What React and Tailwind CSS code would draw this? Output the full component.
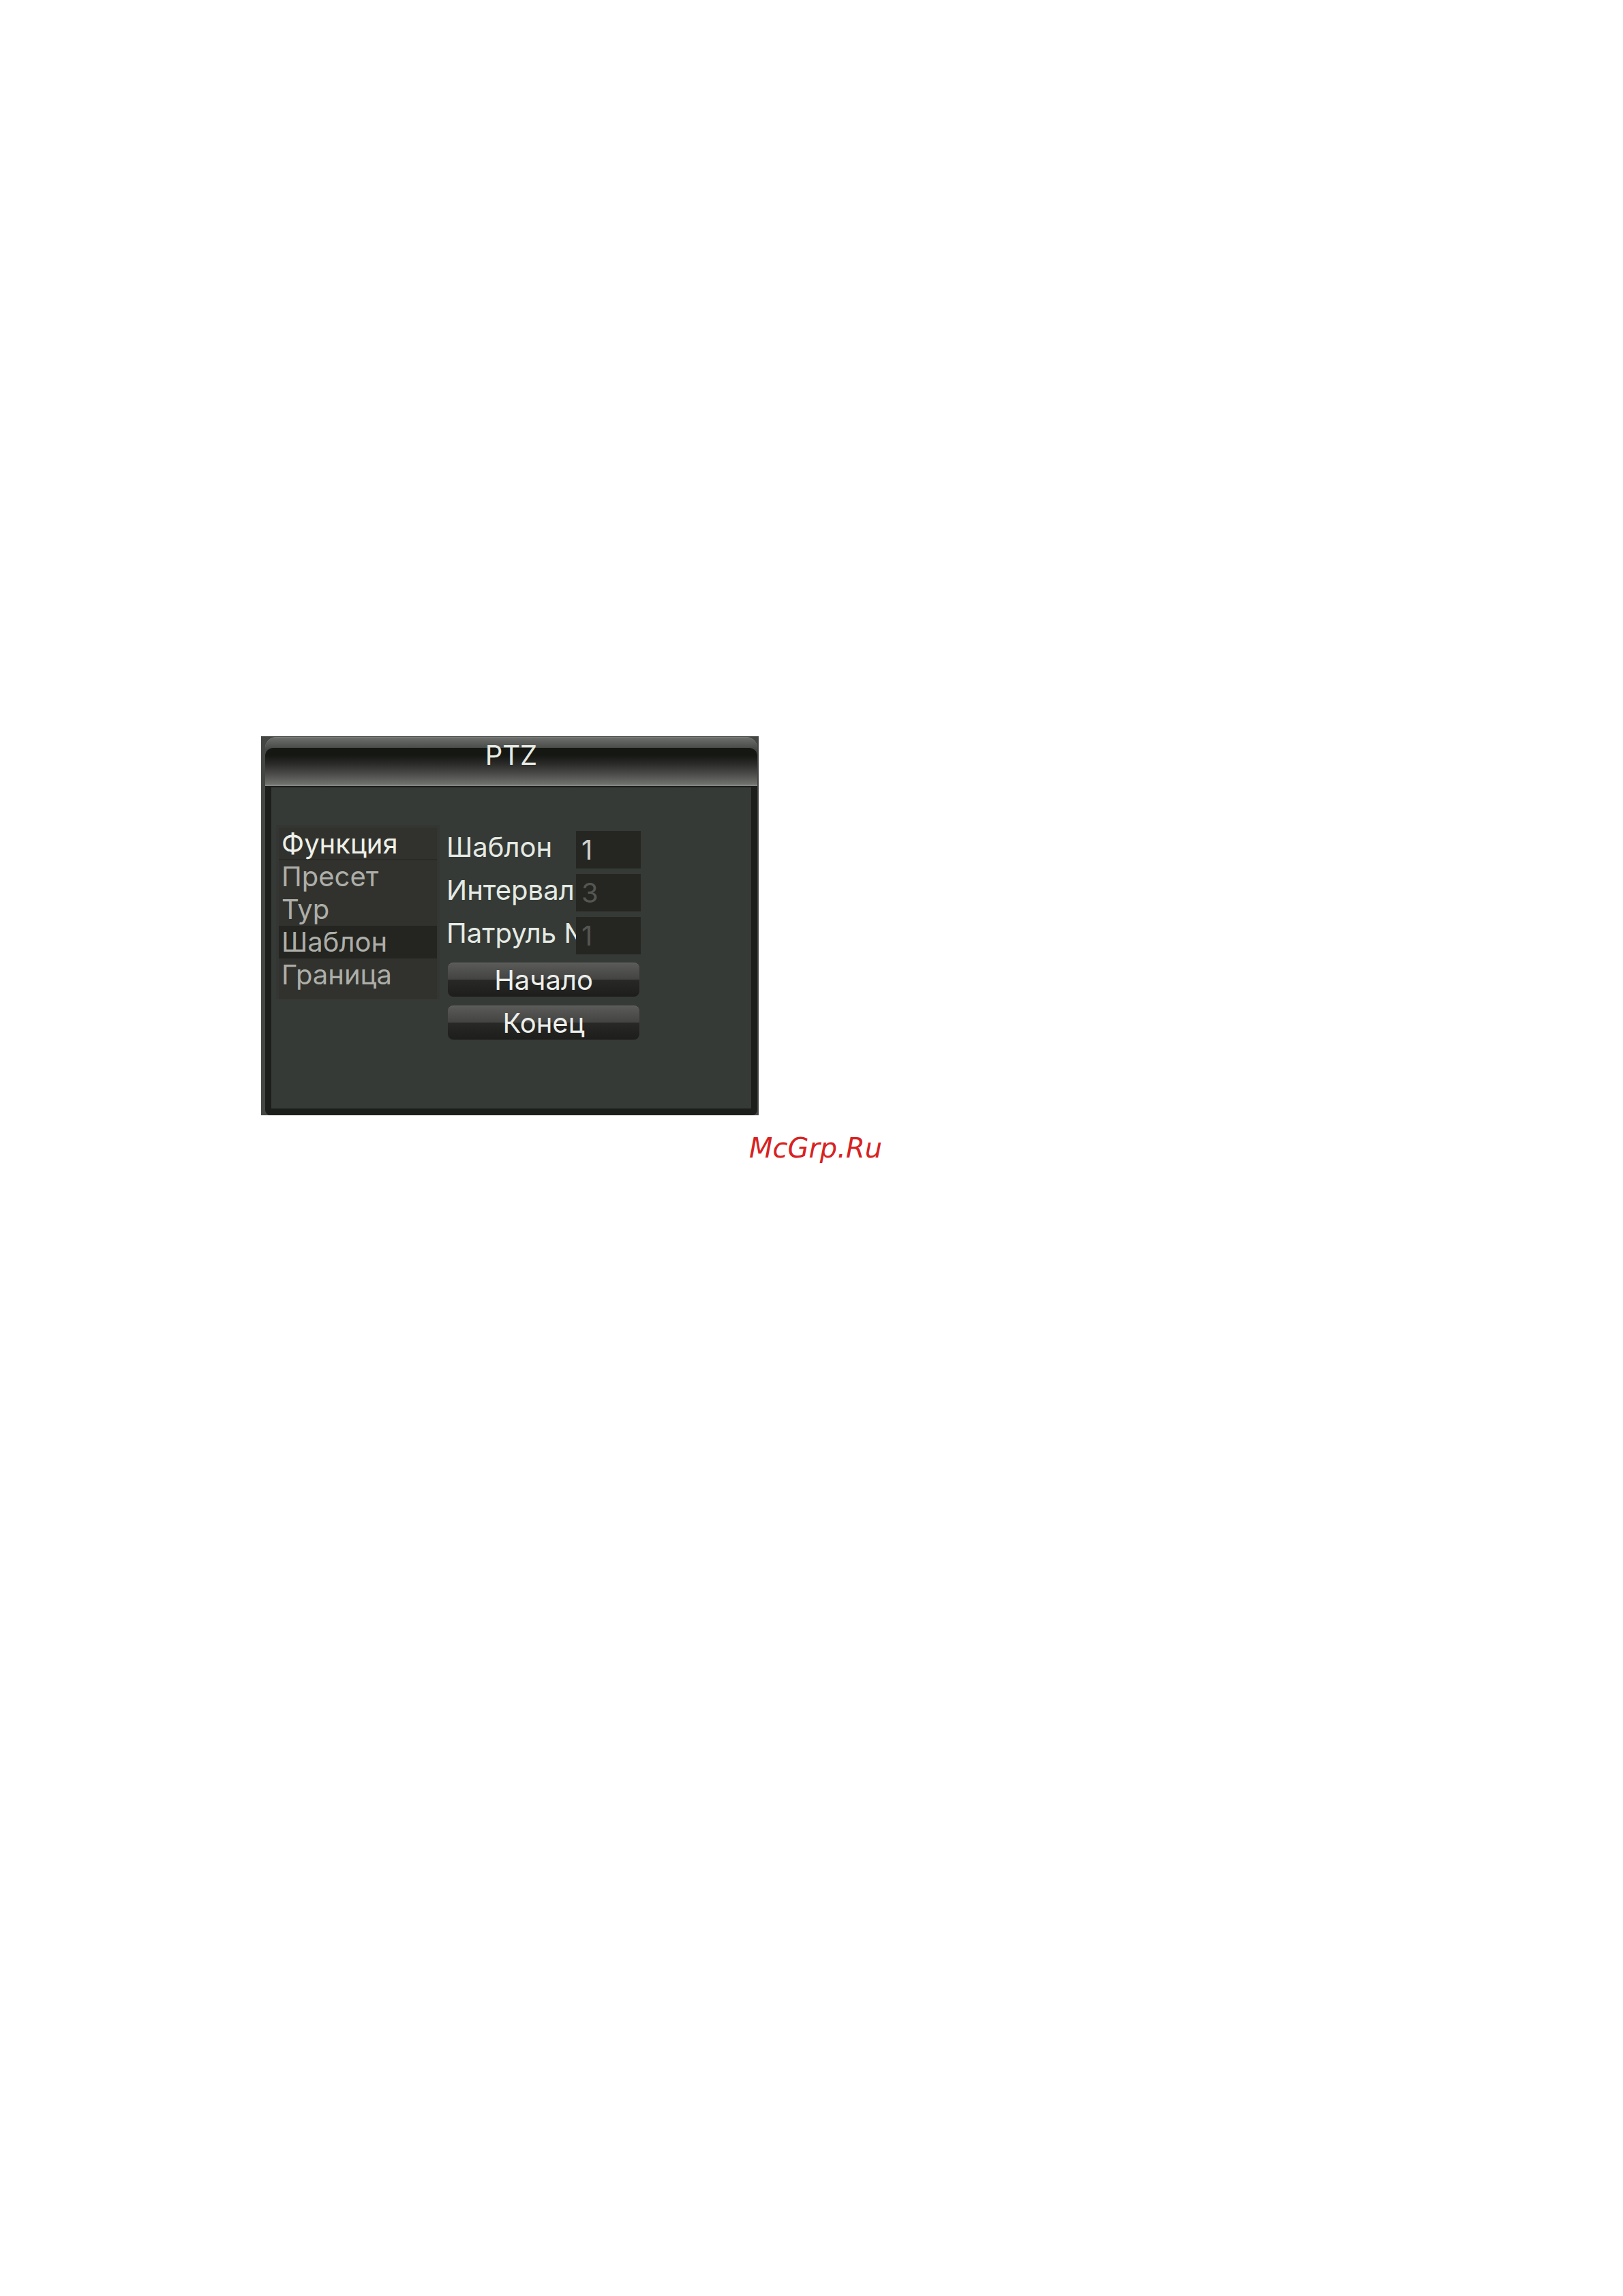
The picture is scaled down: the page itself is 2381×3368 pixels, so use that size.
import { useState } from "react";
import clsx from "clsx";

const functions = ["Пресет", "Тур", "Шаблон", "Граница"];

const TitleBar = ({ title }) => {
  return (
    <header className="ml-[6px] mr-[2px] h-[72px] rounded-t-2xl border-t border-[#7b7d7b] bg-linear-to-b from-[#6c6e6c] to-[#454745] to-25% pt-[15px]">
      <div className="flex h-[56px] items-start justify-center rounded-t-xl border-b-2 border-[#858784] bg-linear-to-b from-[#151713] from-20% via-[#2c2c2a] via-45% to-[#71736f]">
        <h1 className="-mt-3 text-[40px] leading-[46px] text-[#e6eae4]">{title}</h1>
      </div>
    </header>
  );
};

const FunctionList = ({ selected, onSelect }) => {
  return (
    <nav aria-label="Функция" className="w-[240px] border-x-4 border-t-4 border-[#343633] bg-[#31322d] pb-3">
      <h2 className="h-12 border-b-2 border-[#2a2b27] pl-1 text-[40px] leading-[48px] text-[#eef0e8]">Функция</h2>
      <ul>
        {functions.map((name) => (
          <li key={name}>
            <button
              type="button"
              aria-pressed={selected === name}
              onClick={() => onSelect(name)}
              className={clsx(
                "block h-12 w-full pl-1 text-left text-[40px] leading-[46px] text-[#adaea9]",
                selected === name && "bg-[#242520]"
              )}
            >
              {name}
            </button>
          </li>
        ))}
      </ul>
    </nav>
  );
};

// long labels run on under the input
const Field = ({ id, label, value, onChange, disabled }) => {
  return (
    <div className="flex h-[55px] items-start">
      <label htmlFor={id} className="w-[190px] shrink-0 text-[40px] leading-[48px] whitespace-nowrap text-[#e4eae4]">
        {label}
      </label>
      <input
        id={id}
        type="text"
        value={value}
        disabled={disabled}
        onChange={(e) => onChange(e.target.value)}
        className="relative h-full w-[95px] bg-[#252622] pl-2 text-[40px] leading-[48px] text-[#d0d2ce] outline-none disabled:text-[#555652]"
      />
    </div>
  );
};

const PanelButton = ({ children }) => {
  return (
    <button
      type="button"
      className="h-[50px] w-full rounded-lg border-t border-[#666] bg-[linear-gradient(#5a5a59,#434342_49%,#282827_50%,#1d1d1c)] text-[40px] leading-[46px] text-[#eceeea]"
    >
      {children}
    </button>
  );
};

const App = () => {
  const [selected, setSelected] = useState("Шаблон");
  const [pattern, setPattern] = useState("1");
  const [interval, setInterval] = useState("3");
  const [patrol, setPatrol] = useState("1");

  return (
    <main className="min-h-screen bg-white pt-[1080px] font-['Inter',sans-serif]">
      <section className="ml-[383px] w-[730px] bg-[#434643] pt-px">
        <TitleBar title="PTZ" />
        <div className="ml-[6px] mr-[2px] rounded-b-lg border-x-[9px] border-t-2 border-b-[10px] border-[#1b1e1a] bg-[#363a36]">
          <div className="flex h-[471px] items-start gap-[10px] pt-[55px] pl-[7px]">
            <FunctionList selected={selected} onSelect={setSelected} />
            <form className="pt-[9px]" onSubmit={(e) => e.preventDefault()}>
              <div className="flex flex-col gap-2">
                <Field id="pattern" label="Шаблон" value={pattern} onChange={setPattern} />
                <Field id="interval" label="Интервал" value={interval} onChange={setInterval} disabled />
                <Field id="patrol" label="Патруль №" value={patrol} onChange={setPatrol} disabled />
              </div>
              <div className="mt-3 flex flex-col gap-[13px] px-0.5">
                <PanelButton>Начало</PanelButton>
                <PanelButton>Конец</PanelButton>
              </div>
            </form>
          </div>
        </div>
      </section>
      <p className="mt-6 pl-3 text-center font-['DejaVu_Sans',sans-serif] text-[40px] leading-[48px] text-[#d82222] italic">
        McGrp.Ru
      </p>
    </main>
  );
};

export default App;
